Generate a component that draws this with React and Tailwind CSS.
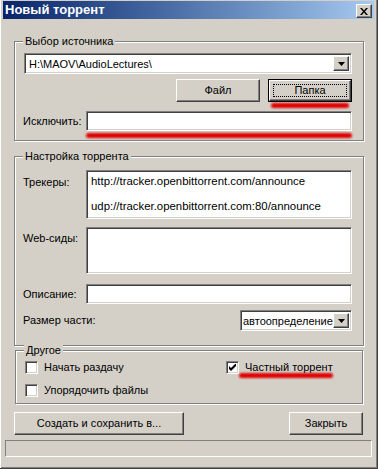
import React from "react";

const sunken =
  "border border-t-[#808080] border-l-[#808080] border-r-white border-b-white shadow-[inset_1px_1px_0_#404040,inset_-1px_-1px_0_#d4d0c8] bg-white";
const raised =
  "border border-t-white border-l-white border-r-[#404040] border-b-[#404040] shadow-[inset_-1px_-1px_0_#808080] bg-[#d4d0c8]";

function Group({ title, className = "", children }) {
  return (
    <fieldset
      className={`border border-[#808080] shadow-[inset_1px_1px_0_#fff,1px_1px_0_#fff] ${className}`}
    >
      <legend className="px-[2px] leading-[13px] bg-[#d4d0c8]">{title}</legend>
      {children}
    </fieldset>
  );
}

function DropButton() {
  return (
    <div className={`${raised} w-[16px] h-full flex items-center justify-center`}>
      <svg width="7" height="4" viewBox="0 0 7 4">
        <path d="M0 0h7L3.5 4z" fill="#000" />
      </svg>
    </div>
  );
}

function Button({ label, className = "", isDefault = false }) {
  if (isDefault) {
    return (
      <div className={`border border-black ${className}`}>
        <div className={`${raised} h-full p-[3px]`}>
          <div className="h-full border border-dotted border-black flex items-center justify-center">
            {label}
          </div>
        </div>
      </div>
    );
  }
  return (
    <div className={`${raised} flex items-center justify-center ${className}`}>{label}</div>
  );
}

function Check({ label, checked = false }) {
  return (
    <div className="flex items-center gap-[6px] h-[13px]">
      <div className={`${sunken} w-[13px] h-[13px] flex items-center justify-center`}>
        {checked && (
          <svg width="7" height="7" viewBox="0 0 7 7">
            <path d="M0 2v3l2 2 5-5V-1L2 4z" fill="#000" />
          </svg>
        )}
      </div>
      <span className="leading-[13px]">{label}</span>
    </div>
  );
}

function Marker({ className = "" }) {
  return (
    <div
      className={`absolute h-[5px] rounded-full bg-[#e10000] blur-[1px] ${className}`}
    />
  );
}

export default function App() {
  return (
    <div className="w-[378px] h-[469px] bg-[#d4d0c8] text-[11px] text-black font-['Liberation_Sans','DejaVu_Sans',sans-serif] pt-[1px] px-[3px] border-r border-b border-r-[#404040] border-b-[#404040] shadow-[inset_1px_0_0_#fff,inset_-1px_-1px_0_#808080] flex flex-col overflow-hidden">
      {/* заголовок */}
      <div className="h-[18px] bg-gradient-to-r from-[#0a246a] to-[#a6caf0] flex items-start justify-between pl-[2px] pr-[2px]">
        <span className="text-white font-bold text-[13px] leading-[18px]">Новый торрент</span>
        <div className={`${raised} mt-[3px] w-[16px] h-[14px] flex items-center justify-center`}>
          <svg width="8" height="7" viewBox="0 0 8 7">
            <path d="M0 0h2l2 2.5L6 0h2L5 3.5 8 7H6L4 4.5 2 7H0l3-3.5z" fill="#000" />
          </svg>
        </div>
      </div>

      {/* Выбор источника */}
      <Group title="Выбор источника" className="ml-[11px] mr-[10px] mt-[16px] pl-[8px] pr-[11px] pb-[9px]">
        <div className={`${sunken} ml-[1px] mt-[5px] h-[21px] flex p-[2px] pl-[4px]`}>
          <span className="flex-1 leading-[17px]">H:\MAOV\AudioLectures\</span>
          <DropButton />
        </div>
        <div className="mt-[5px] flex justify-end gap-[8px]">
          <Button label="Файл" className="w-[84px] h-[23px]" />
          <div className="relative">
            <Button label="Папка" isDefault className="w-[84px] h-[23px]" />
            <Marker className="left-[3px] right-[3px] top-[24px]" />
          </div>
        </div>
        <div className="mt-[9px] flex items-center">
          <span className="w-[63px]">Исключить:</span>
          <div className="relative flex-1">
            <div className={`${sunken} h-[20px]`} />
            <Marker className="left-0 right-0 top-[22px]" />
          </div>
        </div>
      </Group>

      {/* Настройка торрента */}
      <Group title="Настройка торрента" className="ml-[11px] mr-[10px] mt-[9px] pl-[8px] pr-[11px] pb-[14px]">
        <div className="mt-[7px] flex">
          <span className="w-[63px] pt-[4px]">Трекеры:</span>
          <div className={`${sunken} flex-1 h-[49px] px-[4px] pt-[4px] flex flex-col gap-[12px] leading-[13px] text-[11.4px]`}>
            <span>http://tracker.openbittorrent.com/announce</span>
            <span>udp://tracker.openbittorrent.com:80/announce</span>
          </div>
        </div>
        <div className="mt-[8px] flex">
          <span className="w-[63px] pt-[3px]">Web-сиды:</span>
          <div className={`${sunken} flex-1 h-[47px]`} />
        </div>
        <div className="mt-[10px] flex items-center">
          <span className="w-[63px]">Описание:</span>
          <div className={`${sunken} flex-1 h-[20px]`} />
        </div>
        <div className="mt-[6px] flex items-center justify-between">
          <span>Размер части:</span>
          <div className={`${sunken} w-[112px] h-[21px] flex p-[2px] pl-[2px]`}>
            <span className="flex-1 leading-[17px]">автоопределение</span>
            <DropButton />
          </div>
        </div>
      </Group>

      {/* Другое */}
      <Group title="Другое" className="ml-[12px] mr-[11px] mt-[-2px] pl-[9px] pr-[11px] pb-[6px] [&>legend]:-ml-[1px]">
        <div className="mt-[4px] grid grid-cols-[201px_1fr] gap-y-[10px]">
          <Check label="Начать раздачу" />
          <div className="relative">
            <Check label="Частный торрент" checked />
            <Marker className="left-[13px] w-[94px] top-[12px]" />
          </div>
          <Check label="Упорядочить файлы" />
        </div>
      </Group>

      <div className="mt-[8px] ml-[11px] mr-[11px] flex justify-between">
        <Button label="Создать и сохранить в..." className="w-[170px] h-[23px]" />
        <Button label="Закрыть" className="w-[74px] h-[23px]" />
      </div>

      <div className="mt-[5px] mx-[2px] h-[17px] border border-t-[#808080] border-l-[#808080] border-r-white border-b-white" />
    </div>
  );
}
